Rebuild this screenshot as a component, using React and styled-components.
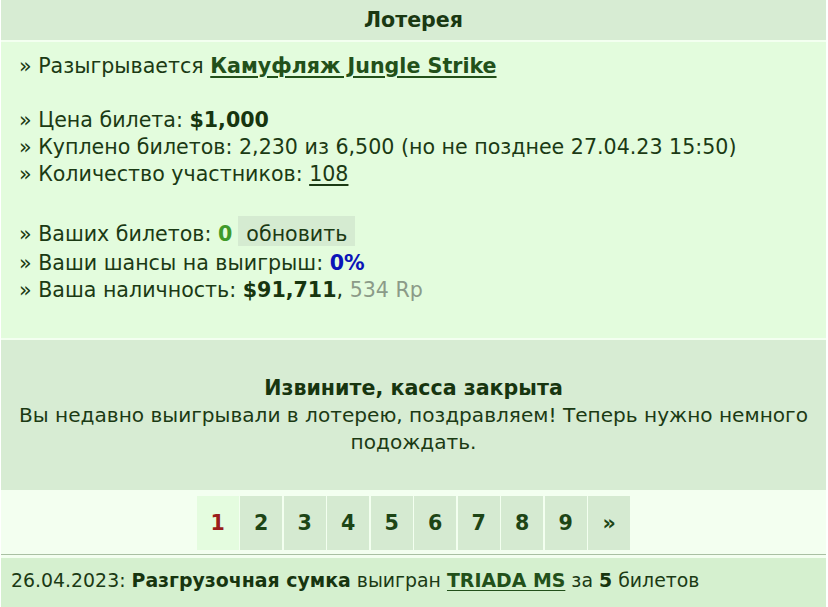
import React from "react";
import styled, { createGlobalStyle } from "styled-components";

const GlobalStyle = createGlobalStyle`
  body {
    margin: 0;
    background: #ffffff;
    font-family: Verdana, "DejaVu Sans", sans-serif;
    font-size: 20.6px;
    color: #1b3a14;
  }
`;

const Page = styled.div`
  margin: 0 2px 0 1px;
  background: #f3fff0;
  display: flex;
  flex-direction: column;
  gap: 2px;
`;

const Header = styled.div`
  height: 40px;
  background: #d7ecd3;
  display: flex;
  align-items: center;
  justify-content: center;
  font-weight: bold;
  color: #1a3812;
`;

const Info = styled.div`
  background: #e3fcdd;
  padding: 11px 18px 0;
  height: 285px;
`;

const Line = styled.div`
  line-height: 27px;
  white-space: nowrap;
  margin-bottom: ${(p) => p.$after || 0}px;
`;

const Spacer = styled.div`
  height: ${(p) => p.$h || 27}px;
`;

const Strong = styled.b`
  color: #17350f;
`;

const ItemLink = styled.a`
  font-weight: bold;
  color: #22501a;
  text-decoration: underline;
  text-underline-offset: 3px;
`;

const PlainLink = styled.a`
  color: #1b3a14;
  text-decoration: underline;
  text-underline-offset: 3px;
`;

const Count = styled.b`
  color: ${(p) => p.$tone || "#17350f"};
`;

const Muted = styled.span`
  color: #8b9b88;
`;

const RefreshButton = styled.span`
  display: inline-block;
  margin-left: 6px;
  padding: 0 8px;
  height: 30px;
  line-height: 36px;
  background: #d5ebd1;
  color: #1b3a14;
`;

const Notice = styled.div`
  height: 150px;
  background: #d7ecd3;
  display: flex;
  flex-direction: column;
  justify-content: center;
  align-items: center;
  text-align: center;
  line-height: 27px;
  padding: 0 2px;
  font-size: 20.1px;
`;

const NoticeTitle = styled.div`
  font-weight: bold;
  font-size: 20.6px;
  color: #17350f;
`;

const Pager = styled.div`
  height: 58px;
  padding-top: 4px;
  display: flex;
  justify-content: center;
  gap: 1.5px;
  border-bottom: 1px solid #a9c0a3;
`;

const PageButton = styled.div`
  width: 42px;
  height: 54px;
  display: flex;
  align-items: center;
  justify-content: center;
  font-weight: bold;
  background: ${(p) => (p.$current ? "#e4fcdf" : "#d5ead1")};
  color: ${(p) => (p.$current ? "#9a1d1b" : "#1d4516")};
`;

const Footer = styled.div`
  margin-top: 1px;
  height: 43px;
  background: #d5f0cf;
  padding: 0 10px 6px;
  display: flex;
  align-items: center;
  white-space: nowrap;
  font-size: 18.9px;
`;

const Tail = styled.div`
  height: 9px;
  background: #eefde9;
`;

const pages = ["1", "2", "3", "4", "5", "6", "7", "8", "9", "»"];

export default function App() {
  return (
    <>
      <GlobalStyle />
      <Page>
        <Header>Лотерея</Header>
        <Info>
          <Line>
            » Разыгрывается <ItemLink href="#">Камуфляж Jungle Strike</ItemLink>
          </Line>
          <Spacer />
          <Line>
            » Цена билета: <Strong>$1,000</Strong>
          </Line>
          <Line>» Куплено билетов: 2,230 из 6,500 (но не позднее 27.04.23 15:50)</Line>
          <Line>
            » Количество участников: <PlainLink href="#">108</PlainLink>
          </Line>
          <Spacer $h={28} />
          <Line $after={2}>
            » Ваших билетов: <Count $tone="#3f9a2a">0</Count>
            <RefreshButton>обновить</RefreshButton>
          </Line>
          <Line>
            » Ваши шансы на выигрыш: <Count $tone="#0a14b8">0%</Count>
          </Line>
          <Line>
            » Ваша наличность: <Strong>$91,711</Strong>, <Muted>534 Rp</Muted>
          </Line>
        </Info>
        <Notice>
          <NoticeTitle>Извините, касса закрыта</NoticeTitle>
          <div>Вы недавно выигрывали в лотерею, поздравляем! Теперь нужно немного подождать.</div>
        </Notice>
        <Pager>
          {pages.map((n, i) => (
            <PageButton key={n} $current={i === 0}>
              {n}
            </PageButton>
          ))}
        </Pager>
        <Footer>
          <span>
            26.04.2023: <Strong>Разгрузочная сумка</Strong> выигран{" "}
            <ItemLink href="#">TRIADA MS</ItemLink> за <Strong>5</Strong> билетов
          </span>
        </Footer>
        <Tail />
      </Page>
    </>
  );
}
